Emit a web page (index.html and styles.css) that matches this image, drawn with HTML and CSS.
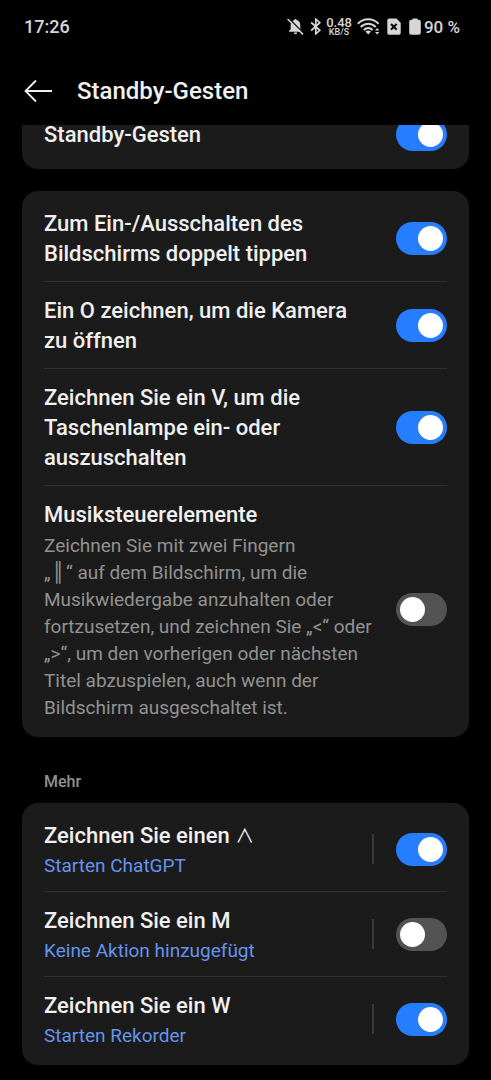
FILE: index.html
```html
<!DOCTYPE html>
<html lang="de">
<head>
  <meta charset="UTF-8">
  <meta name="viewport" content="width=device-width, initial-scale=1.0">
  <title>Standby-Gesten</title>
  <link rel="stylesheet" href="styles.css">
</head>
<body>
  <header class="top">
    <div class="status">
      <span class="clock">17:26</span>
      <div class="status-icons">
        <svg width="17" height="17" viewBox="0 0 17 17">
          <path d="M8.500 1c.7 0 1.100.5 1.100 1.100C12 2.700 13.300 4.600 13.300 7v4l1.700 2v.8H2v-.8l1.700-2V7c0-2.400 1.300-4.300 3.700-4.900C7.400 1.500 7.800 1 8.500 1zM6.800 14.600h3.400c0 1-.7 1.700-1.700 1.700s-1.700-.7-1.700-1.700z" fill="#d6d6d6"/>
          <path d="M1.600.4l15 15" stroke="#000" stroke-width="1.600"/>
          <path d="M.6 1l15.400 15.400" stroke="#d6d6d6" stroke-width="1.500"/>
        </svg>
        <svg class="bt" width="12" height="17" viewBox="0 0 12 17">
          <path d="M1.200 4.500l8.600 7.800-4 3.500V1.200l4 3.500-8.600 7.800" fill="none" stroke="#d6d6d6" stroke-width="1.700"/>
        </svg>
        <div class="speed"><span class="speed-value">0.48</span><span class="speed-unit">KB/S</span></div>
        <svg class="wifi" width="23" height="17" viewBox="0 0 23 17">
          <g fill="none" stroke="#d6d6d6" stroke-width="2">
            <path d="M.8 5.800C6.800-.2 15.600-.2 21.600 5.800"/>
            <path d="M3.700 9C8 4.700 14.400 4.700 18.700 9"/>
            <path d="M6.800 11.900c2.600-2.400 6.200-2.400 8.800 0"/>
          </g>
          <path d="M8.400 13.500c1.700-1.300 3.900-1.300 5.600 0L11.200 16.500z" fill="#d6d6d6"/>
          <path d="M18 12.600l2.200-2.600 2.200 2.600zM18 14l2.200 2.600L22.400 14z" fill="#d6d6d6"/>
        </svg>
        <svg class="sim" width="14" height="17" viewBox="0 0 14 17">
          <path d="M2 .5h7.500L13.700 4.700V15a1.700 1.700 0 0 1-1.700 1.700H2A1.700 1.700 0 0 1 .3 15V2.200A1.700 1.700 0 0 1 2 .5z" fill="#d6d6d6"/>
          <path d="M4 6l5.600 5.600M9.600 6L4 11.600" stroke="#000" stroke-width="2"/>
        </svg>
        <svg class="battery" width="12" height="17" viewBox="0 0 12 17">
          <path d="M3.500.5h5v1.200h1.300a2 2 0 0 1 2 2v11a2 2 0 0 1-2 2H2.200a2 2 0 0 1-2-2v-11a2 2 0 0 1 2-2h1.300z" fill="#d6d6d6"/>
        </svg>
        <span class="percent">90 %</span>
      </div>
    </div>
    <div class="title-bar">
      <button class="back" type="button" aria-label="Zurück">
        <svg width="28" height="24" viewBox="0 0 28 24">
          <path d="M12 1.500L1.500 12 12 22.500M1.500 12H28" fill="none" stroke="#f0f0f0" stroke-width="1.800"/>
        </svg>
      </button>
      <h1>Standby-Gesten</h1>
    </div>
  </header>

  <main>
    <section class="card">
      <div class="row">
        <label class="text name" for="standby">Standby-Gesten</label>
        <input class="switch" type="checkbox" id="standby" checked>
      </div>
    </section>

    <section class="card">
      <div class="row">
        <label class="text name" for="tap">Zum Ein-/Ausschalten des Bildschirms doppelt tippen</label>
        <input class="switch" type="checkbox" id="tap" checked>
      </div>
      <div class="row">
        <label class="text name" for="camera">Ein O zeichnen, um die Kamera zu öffnen</label>
        <input class="switch" type="checkbox" id="camera" checked>
      </div>
      <div class="row">
        <label class="text name" for="torch">Zeichnen Sie ein V, um die Taschenlampe ein- oder auszuschalten</label>
        <input class="switch" type="checkbox" id="torch" checked>
      </div>
      <div class="row">
        <div class="text">
          <label class="name" for="music">Musiksteuerelemente</label>
          <p class="desc">Zeichnen Sie mit zwei Fingern<br>„<span class="bars">║</span>“ auf dem Bildschirm, um die Musikwiedergabe anzuhalten oder fortzusetzen, und zeichnen Sie „&lt;“ oder „&gt;“, um den vorherigen oder nächsten Titel abzuspielen, auch wenn der Bildschirm ausgeschaltet ist.</p>
        </div>
        <input class="switch" type="checkbox" id="music">
      </div>
    </section>

    <h2>Mehr</h2>
    <section class="card">
      <div class="row">
        <div class="text">
          <label class="name" for="caret">Zeichnen Sie einen <span class="caret">∧</span></label>
          <a class="action" href="#">Starten ChatGPT</a>
        </div>
        <span class="divider"></span>
        <input class="switch" type="checkbox" id="caret" checked>
      </div>
      <div class="row">
        <div class="text">
          <label class="name" for="draw-m">Zeichnen Sie ein M</label>
          <a class="action" href="#">Keine Aktion hinzugefügt</a>
        </div>
        <span class="divider"></span>
        <input class="switch" type="checkbox" id="draw-m">
      </div>
      <div class="row">
        <div class="text">
          <label class="name" for="draw-w">Zeichnen Sie ein W</label>
          <a class="action" href="#">Starten Rekorder</a>
        </div>
        <span class="divider"></span>
        <input class="switch" type="checkbox" id="draw-w" checked>
      </div>
    </section>
  </main>
</body>
</html>
```

FILE: styles.css
```css
* {
  margin: 0;
  padding: 0;
  box-sizing: border-box;
}

body {
  font-family: Roboto, "Noto Sans", sans-serif;
  background: #000;
  color: #f0f0f0;
}

/* header stays on top while the cards scroll under it */
.top {
  position: sticky;
  top: 0;
  z-index: 1;
  background: #000;
  padding-bottom: 14px;
}

.status {
  display: flex;
  justify-content: space-between;
  align-items: center;
  height: 53px;
  padding: 0 31px 0 24px;
  color: #d6d6d6;
  font-weight: 500;
}

.clock {
  font-size: 18px;
}

.status-icons {
  display: flex;
  align-items: center;
}

.bt {
  margin-left: 6px;
}

.speed {
  display: flex;
  flex-direction: column;
  align-items: center;
  margin-left: 4px;
}

.speed-value {
  font-size: 13px;
  line-height: 10px;
}

.speed-unit {
  font-size: 9px;
  line-height: 8px;
}

.wifi {
  margin-left: 5px;
}

.sim {
  margin-left: 7px;
}

.battery {
  margin-left: 8px;
}

.percent {
  margin-left: 3px;
  font-size: 17px;
}

.title-bar {
  display: flex;
  align-items: center;
  gap: 25px;
  height: 58px;
  padding: 18px 24px 0;
}

.back {
  display: flex;
  border: 0;
  background: none;
}

h1 {
  font-size: 24px;
  font-weight: 500;
}

main {
  display: flex;
  flex-direction: column;
  margin-top: -26px;
  padding: 0 22px 15px;
}

.card {
  padding: 4px 22px;
  border-radius: 16px;
  background: #1b1b1b;
}

.card + .card {
  margin-top: 22px;
}

.row {
  display: flex;
  align-items: center;
  min-height: 62px;
  padding: 12px 0;
}

.row + .row {
  border-top: 1px solid #303030;
}

.text {
  flex: 1;
  margin-right: 22px;
  padding-top: 2px;
}

.name {
  display: block;
  font-size: 22px;
  font-weight: 500;
  line-height: 30px;
}

.desc,
.action {
  display: block;
  margin-top: 1px;
  font-size: 19px;
  line-height: 27px;
}

.desc {
  margin-top: 2px;
  color: #929292;
}

.action {
  color: #6495ec;
  text-decoration: none;
}

.bars {
  margin: 0 2px;
  font-family: "DejaVu Sans", sans-serif;
  line-height: 1;
}

.caret {
  font-family: "Noto Sans CJK SC", sans-serif;
  font-size: 19px;
  font-weight: 400;
  line-height: 1;
}

.divider {
  width: 2px;
  height: 30px;
  margin-right: 22px;
  background: #3a3a3a;
}

.switch {
  appearance: none;
  display: flex;
  flex: none;
  width: 51px;
  height: 33px;
  padding: 4px;
  border-radius: 17px;
  background: #535353;
}

.switch::before {
  content: "";
  width: 25px;
  height: 25px;
  border-radius: 50%;
  background: #fff;
}

.switch:checked {
  justify-content: flex-end;
  background: #267dff;
}

h2 {
  margin: 34px 22px 10px;
  color: #929292;
  font-size: 16px;
  font-weight: 500;
  line-height: 22px;
}
```
